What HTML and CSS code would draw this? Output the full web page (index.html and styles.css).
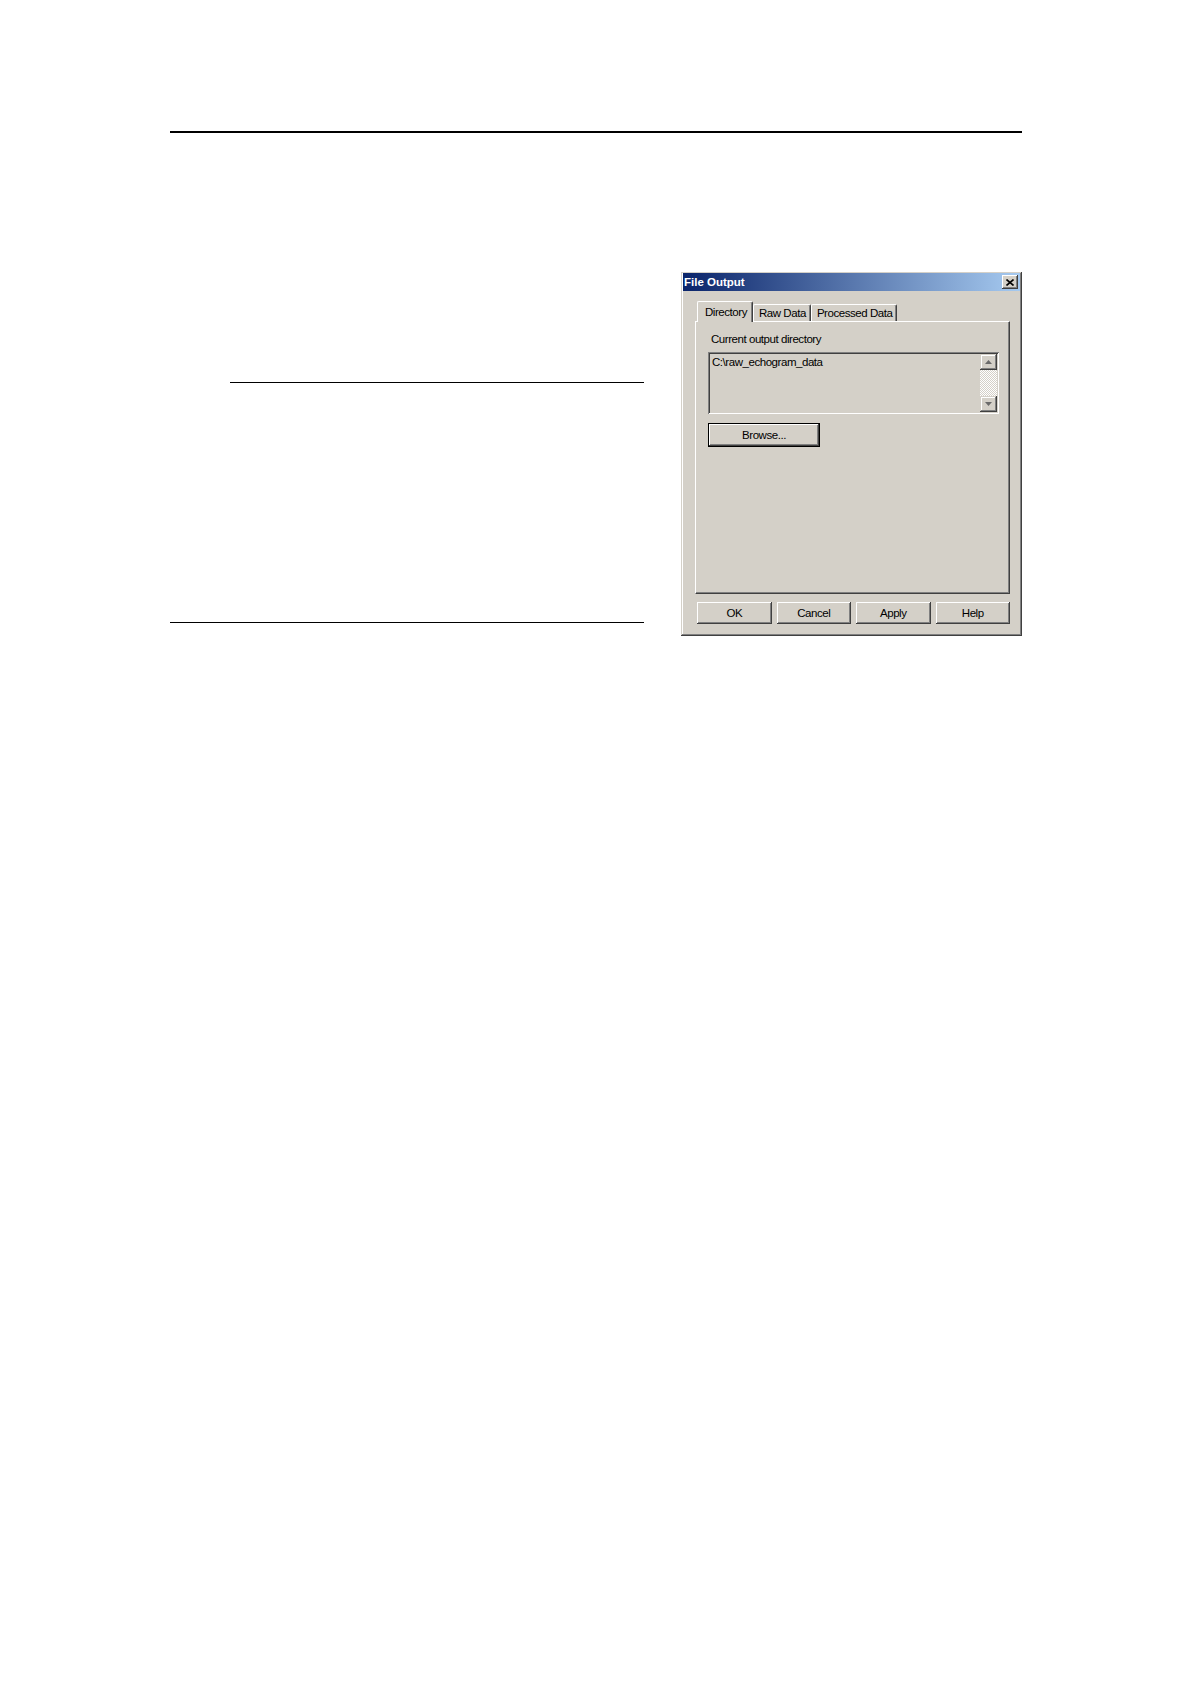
FILE: index.html
```html
<!DOCTYPE html>
<html lang="en">
<head>
<meta charset="UTF-8">
<title>File Output</title>
<link rel="stylesheet" href="styles.css">
</head>
<body>
<div class="page">
    <div class="header-rule"></div>
    <div class="section">
        <div class="text-column">
            <div class="rule rule-indent"></div>
            <div class="rule rule-end"></div>
        </div>
        <div class="dialog">
            <div class="titlebar">
                <span class="title">File Output</span>
                <span class="close-btn">
                    <svg width="8" height="7" viewBox="0 0 8 7">
                        <path d="M0.5 0.5 L7.5 6.5 M7.5 0.5 L0.5 6.5" stroke="#000" stroke-width="1.6"/>
                    </svg>
                </span>
            </div>
            <div class="dialog-body">
                <div class="tabs">
                    <div class="tab active">Directory</div>
                    <div class="tab">Raw Data</div>
                    <div class="tab">Processed Data</div>
                </div>
                <div class="tab-panel">
                    <div class="label">Current output directory</div>
                    <div class="textbox">
                        <span class="textbox-value">C:\raw_echogram_data</span>
                        <div class="scrollbar">
                            <div class="scroll-btn">
                                <svg width="7" height="4" viewBox="0 0 7 4"><polygon points="3.5,0 7,4 0,4" fill="#6a6a6a"/></svg>
                            </div>
                            <div class="scroll-track"></div>
                            <div class="scroll-btn">
                                <svg width="7" height="4" viewBox="0 0 7 4"><polygon points="0,0 7,0 3.5,4" fill="#6a6a6a"/></svg>
                            </div>
                        </div>
                    </div>
                    <button class="win-btn default-btn">Browse...</button>
                </div>
                <div class="button-row">
                    <button class="win-btn">OK</button>
                    <button class="win-btn">Cancel</button>
                    <button class="win-btn">Apply</button>
                    <button class="win-btn">Help</button>
                </div>
            </div>
        </div>
    </div>
</div>
</body>
</html>
```

FILE: styles.css
```css
/* Page */
* {
    box-sizing: border-box;
}
body {
    margin: 0;
    background: #fff;
    font-family: "Liberation Sans", Arial, sans-serif;
}
.page {
    width: 1191px;
    padding-left: 170px;
    padding-top: 131px;
}
.header-rule {
    width: 852px;
    border-top: 2px solid #000;
}
.section {
    display: flex;
    justify-content: space-between;
    width: 852px;
    margin-top: 139px;
}
.text-column {
    width: 474px;
    padding-top: 110px;
}
.rule {
    border-top: 1.5px solid #000;
}
.rule-indent {
    margin-left: 60px;
}
.rule-end {
    margin-top: 239px;
}

/* Dialog */
.dialog {
    width: 341px;
    height: 364px;
    padding: 1px 2px 2px 2px;
    background: #d4d0c8;
    box-shadow: inset -1px -1px #404040, inset 1px 1px #d4d0c8,
                inset -2px -2px #808080, inset 2px 2px #fff;
    font-family: "Liberation Sans", Arial, sans-serif;
    font-size: 11.5px;
    letter-spacing: -0.45px;
    color: #000;
}
.titlebar {
    height: 18px;
    display: flex;
    align-items: center;
    justify-content: space-between;
    padding: 0 2px 0 1px;
    background: linear-gradient(to right, #0a246a, #a6caf0);
}
.title {
    color: #fff;
    font-weight: bold;
    letter-spacing: 0;
}
.close-btn {
    width: 16px;
    height: 14px;
    display: flex;
    align-items: center;
    justify-content: center;
    background: #d4d0c8;
    box-shadow: inset -1px -1px #404040, inset 1px 1px #fff,
                inset -2px -2px #808080;
}
.dialog-body {
    padding: 10px 10px 0 12px;
}

/* Tabs */
.tabs {
    display: flex;
    align-items: flex-end;
    height: 20px;
    margin-left: 2px;
}
.tab {
    height: 17px;
    padding: 0 4px 0 5px;
    line-height: 17px;
    border-left: 1px solid #fff;
    border-top: 1px solid #fff;
    border-right: 1px solid #404040;
    box-shadow: inset -1px 0 #808080;
    border-top-left-radius: 2px;
    border-top-right-radius: 2px;
}
.tab.active {
    height: 21px;
    margin-bottom: -1px;
    padding: 0 5px 0 7px;
    line-height: 20px;
    background: #d4d0c8;
    position: relative;
    z-index: 1;
}
.tab-panel {
    width: 315px;
    height: 273px;
    padding: 10px 12px 0 12px;
    border-top: 1px solid #fff;
    border-left: 1px solid #fff;
    border-right: 1px solid #404040;
    border-bottom: 1px solid #404040;
    box-shadow: inset -1px -1px #808080;
}
.label {
    margin-left: 3px;
    line-height: 15px;
}
.textbox {
    width: 291px;
    height: 62px;
    margin-top: 5px;
    display: flex;
    justify-content: space-between;
    padding: 2px;
    box-shadow: inset 1px 1px #808080, inset -1px -1px #fff,
                inset 2px 2px #404040, inset -2px -2px #d4d0c8;
}
.textbox-value {
    padding: 1px 2px;
    line-height: 15px;
}
.scrollbar {
    width: 17px;
    display: flex;
    flex-direction: column;
}
.scroll-btn {
    height: 16px;
    display: flex;
    align-items: center;
    justify-content: center;
    background: #d4d0c8;
    box-shadow: inset -1px -1px #404040, inset 1px 1px #d4d0c8,
                inset -2px -2px #808080, inset 2px 2px #fff;
}
.scroll-track {
    flex: 1;
    background: repeating-conic-gradient(#fff 0 25%, #d4d0c8 0 50%) 0 0 / 2px 2px;
}

/* Buttons */
.win-btn {
    width: 75px;
    height: 22px;
    padding: 0;
    border: none;
    background: #d4d0c8;
    font: inherit;
    letter-spacing: inherit;
    color: #000;
    box-shadow: inset -1px -1px #404040, inset 1px 1px #fff,
                inset -2px -2px #808080, inset 2px 2px #d4d0c8;
}
.default-btn {
    display: block;
    width: 112px;
    height: 24px;
    margin-top: 9px;
    border: 1px solid #000;
}
.button-row {
    display: flex;
    gap: 5px;
    margin: 8px 0 0 2px;
}
```
